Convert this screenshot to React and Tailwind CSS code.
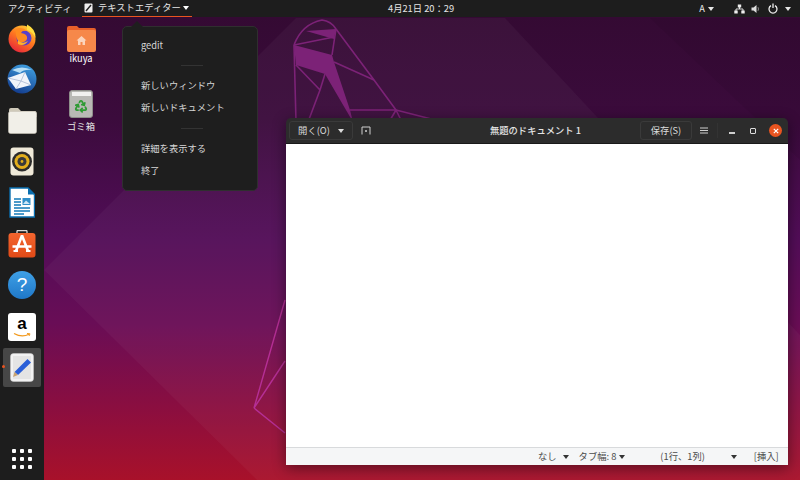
import { useState } from 'react';
import { Recycle } from 'lucide-react';

const font = 'font-["Noto_Sans_CJK_JP","Noto_Sans",sans-serif]';

function Caret({ className = 'border-t-white' }) {
  return <span className={`inline-block shrink-0 w-0 h-0 border-x-[3.5px] border-x-transparent border-t-[4px] ${className}`}></span>;
}

function Wallpaper() {
  return (
    <svg className="absolute inset-0 w-full h-full" viewBox="44 17 756 463">
      <polygon points="44,270 296,18 505,18 800,335 800,480 257,480" fill="#ffffff" opacity="0.035" />
      <polygon points="650,18 800,18 800,160" fill="#000000" opacity="0.05" />
      <g fill="none" stroke="#7c2277" strokeWidth="1.6" strokeLinejoin="round">
        <path d="M294,45 Q302,24 322,20 Q331,21 336,29 L374,80 L396,110 L443,122" />
        <path d="M294,45 L296,122 M336,29 L332,55 M294,45 L334,37 M296,65 L320,90 L308,122 M325,74 L320,90" />
        <path d="M334,62 L374,80 M350,110 L396,110 L389,122 M396,110 L402,122" />
      </g>
      <polygon points="306,31 336,29 334,39" fill="#7c2277" />
      <polygon points="294,45 332,55 334,62 350,110 353,122 325,74 296,65" fill="#7c2277" />
      <g fill="none" stroke="#b52f95" strokeWidth="1.4">
        <path d="M254,408 L285,300 M254,408 L285,361 M254,408 L285,433" />
      </g>
    </svg>
  );
}

function TopBar() {
  return (
    <div className={`h-[17px] shrink-0 bg-[#1d1d1d] text-[#e6e6e6] flex items-center text-[9.3px] whitespace-nowrap ${font}`}>
      <span className="ml-2 w-[74px]">アクティビティ</span>
      <div className="h-full w-[110px] flex items-center border-b border-[#e95420]">
        <svg className="ml-[2px] mr-[5px] shrink-0" width="9" height="10" viewBox="0 0 9 10">
          <rect x="0.5" y="0.5" width="8" height="9" rx="1" fill="#eee" />
          <path d="M2,8 L7,2" stroke="#222" strokeWidth="1.4" />
        </svg>
        <span>テキストエディター</span>
        <Caret className="ml-[2px] border-t-white" />
      </div>
      <span className="ml-[196px] w-[68px]">4月21日 20：29</span>
      <div className="ml-auto flex items-center pr-[9px]">
        <span>A</span>
        <Caret className="ml-[3px] mr-[20px] border-t-[#e6e6e6]" />
        <svg width="11" height="10" viewBox="0 0 11 10" fill="#eee">
          <rect x="3.8" y="0.5" width="3.4" height="3" />
          <rect x="0.3" y="6.5" width="3.4" height="3" />
          <rect x="7.3" y="6.5" width="3.4" height="3" />
          <path d="M5.5,3 V5 M2,7 V5 H9 V7" stroke="#eee" strokeWidth="0.9" fill="none" />
        </svg>
        <svg className="ml-[6px]" width="10" height="10" viewBox="0 0 10 10" fill="#ddd">
          <path d="M0.5,3.5 H2.5 L5.5,1 V9 L2.5,6.5 H0.5 Z" />
          <path d="M7,3.2 Q8,5 7,6.8" stroke="#888" fill="none" />
        </svg>
        <svg className="ml-[7px]" width="10" height="11" viewBox="0 0 10 11" fill="none" stroke="#eee" strokeWidth="1.3">
          <path d="M3,2.6 A4,4 0 1 0 7,2.6" />
          <path d="M5,0.6 V5" />
        </svg>
        <Caret className="ml-[7px] border-t-[#e6e6e6]" />
      </div>
    </div>
  );
}

const FirefoxIcon = (
  <svg width="30" height="30" viewBox="0 0 30 30">
    <defs>
      <linearGradient id="ff" x1="0.8" y1="0" x2="0.2" y2="1">
        <stop offset="0" stopColor="#ffd43a" />
        <stop offset="0.45" stopColor="#ff7a1f" />
        <stop offset="1" stopColor="#e5213c" />
      </linearGradient>
    </defs>
    <circle cx="15" cy="16" r="13.5" fill="url(#ff)" />
    <circle cx="17" cy="15" r="7.5" fill="#5a3fc8" />
    <path d="M9,6 Q15,3 20,8 Q15,7 14,10 Q21,11 20,16 Q18,20 13,19 Q8,17 9,6 Z" fill="#ff8a1f" />
    <path d="M20,1.5 Q29,6 28.5,15 Q26,9 20,7 Z" fill="#ffdd3f" />
    <path d="M11,17 Q15,22 21,18 Q17,24 11,21 Z" fill="#ffb32c" />
  </svg>
);

const ThunderbirdIcon = (
  <svg width="30" height="30" viewBox="0 0 30 30">
    <defs>
      <linearGradient id="tb" x1="0.7" y1="0" x2="0.3" y2="1">
        <stop offset="0" stopColor="#3f9fe0" />
        <stop offset="1" stopColor="#123a8c" />
      </linearGradient>
    </defs>
    <circle cx="15" cy="15" r="14.5" fill="url(#tb)" />
    <path d="M5,6 Q15,1 25,6 Q17,5 13,9 Z" fill="#b7def5" />
    <path d="M1,14 L18,8 L24,21 L9,25 Z" fill="#f1f4fa" />
    <path d="M1,14 L14,17 L18,8 M9,25 L14,17 L24,21" fill="none" stroke="#a9b8d2" strokeWidth="0.8" />
  </svg>
);

const FilesIcon = (
  <svg width="29" height="27" viewBox="0 0 29 27">
    <path d="M1,3 Q1,1 3,1 H10 L13,4 H27 Q28.5,4 28.5,6 V10 H1 Z" fill="#cfc9b9" />
    <rect x="0.5" y="4.5" width="28" height="22" rx="2" fill="#f1efe8" stroke="#c9c5b8" strokeWidth="0.6" />
  </svg>
);

const RhythmboxIcon = (
  <svg width="24" height="29" viewBox="0 0 24 29">
    <rect x="0.5" y="0.5" width="23" height="28" rx="3" fill="#efe9d8" />
    <circle cx="12" cy="14.5" r="10" fill="#2b2b2b" />
    <circle cx="12" cy="14.5" r="7.5" fill="#e3ae1c" />
    <circle cx="12" cy="14.5" r="4.5" fill="#3a3a3a" />
    <circle cx="12" cy="14.5" r="1.4" fill="#e3ae1c" />
  </svg>
);

const WriterIcon = (
  <svg width="26" height="31" viewBox="0 0 26 31">
    <path d="M1,1 H19 L25.5,7.5 V30 H1 Z" fill="#ffffff" stroke="#0a6fb0" strokeWidth="1.4" />
    <path d="M19,1 L25.5,7.5 H19 Z" fill="#0a6fb0" />
    <g stroke="#1379b8" strokeWidth="1.3">
      <path d="M5,12 H12 M5,15 H12 M5,18 H12 M5,21 H21 M5,24 H21 M5,27 H15" />
    </g>
    <rect x="13.5" y="11" width="8" height="7" fill="#2f8ec9" />
    <path d="M14,17 L17,13.5 L21,17 Z" fill="#cfe7f6" />
  </svg>
);

const SoftwareIcon = (
  <svg width="28" height="28" viewBox="0 0 28 28">
    <defs>
      <linearGradient id="sw" x1="0" y1="0" x2="0" y2="1">
        <stop offset="0" stopColor="#f4652e" />
        <stop offset="1" stopColor="#e04a17" />
      </linearGradient>
    </defs>
    <path d="M9,4 V1.5 Q9,0.5 10,0.5 H18 Q19,0.5 19,1.5 V4" fill="none" stroke="#d9d9d9" strokeWidth="1.3" />
    <rect x="0.5" y="3" width="27" height="24.5" rx="3" fill="url(#sw)" />
    <path d="M14,5.5 L20,21 M14,5.5 L8,21 M4.5,16.5 H23.5" stroke="#ffffff" strokeWidth="2.6" fill="none" />
    <path d="M5.5,21 H10 M18,21 H22.5" stroke="#ffffff" strokeWidth="2" />
  </svg>
);

const HelpIcon = (
  <div className="w-7 h-7 rounded-full bg-gradient-to-b from-[#3fa0e6] to-[#1f78c8] flex items-center justify-center text-white text-[19px] font-['Liberation_Sans',sans-serif]">?</div>
);

const AmazonIcon = (
  <div className="w-7 h-7 rounded-[3px] bg-white flex flex-col items-center">
    <span className="text-black text-[17px] leading-[20px] font-bold mt-[1px] font-['Liberation_Sans',sans-serif]">a</span>
    <svg className="-mt-[1px]" width="18" height="5" viewBox="0 0 18 5">
      <path d="M1,0.5 Q9,5 16,1.2" fill="none" stroke="#f29a1e" strokeWidth="1.2" />
      <path d="M14,0.5 L17,0.8 L16,3" fill="none" stroke="#f29a1e" strokeWidth="1" />
    </svg>
  </div>
);

const GeditIcon = (
  <svg width="24" height="29" viewBox="0 0 24 29">
    <rect x="0.5" y="0.5" width="23" height="28" rx="3" fill="#f2f2f2" stroke="#cfcfcf" strokeWidth="0.5" />
    <rect x="3" y="3" width="18" height="23" fill="#e4e4e4" />
    <path d="M17.5,6 L21,9.5 L8,22 L4.5,19 Z" fill="#2a5fd8" />
    <path d="M4.5,19 L8,22 L3,24 Z" fill="#c9a26f" />
  </svg>
);

function Dock() {
  const apps = [FirefoxIcon, ThunderbirdIcon, FilesIcon, RhythmboxIcon, WriterIcon, SoftwareIcon, HelpIcon, AmazonIcon];
  return (
    <div className="w-[44px] shrink-0 bg-[#1d1d1d] flex flex-col items-center">
      {apps.map((icon, i) => (
        <div key={i} className="h-[41.3px] w-full flex items-center justify-center">{icon}</div>
      ))}
      <div className="relative mt-[1px] w-[38px] h-[39px] rounded-[2px] bg-[#474747] flex items-center justify-center">
        {GeditIcon}
        <span className="absolute -left-[1px] top-[17px] w-[3px] h-[3px] rounded-full bg-[#e95420]"></span>
      </div>
      <div className="mt-auto mb-[11px] grid grid-cols-3 gap-[4px]">
        {Array.from({ length: 9 }).map((_, i) => (
          <span key={i} className="w-[4px] h-[4px] rounded-[1px] bg-white"></span>
        ))}
      </div>
    </div>
  );
}

function DesktopIcons() {
  return (
    <div className={`relative flex flex-col items-center w-[40px] ml-[17px] pt-[8px] text-white text-[9.3px] whitespace-nowrap ${font}`}>
      <svg width="29" height="27" viewBox="0 0 29 27">
        <path d="M0,3 Q0,1 2,1 H10 L12,3 H27 Q29,3 29,5 V10 H0 Z" fill="#e8602a" />
        <rect x="0" y="5" width="29" height="22" rx="2" fill="#f6884a" />
        <path d="M14.5,11 L9.5,15.5 H11 V20 H18 V15.5 H19.5 Z M13.5,17 H15.5 V20 H13.5 Z" fill="#fbd4bc" fillRule="evenodd" />
      </svg>
      <span className="-mt-[1px] leading-[14px]">ikuya</span>
      <div className="relative mt-[25px] w-[24px] h-[28px] rounded-[3px] bg-[#b9b9b5] border border-[#8e8e8a] flex flex-col items-center">
        <span className="mt-[1px] w-[19px] h-[4px] bg-[#f1f1ef]"></span>
        <Recycle className="mt-[3px] text-[#2f9b34]" size={14} strokeWidth={3} />
      </div>
      <span className="mt-[1px] leading-[14px] text-[#e8e8e8]">ゴミ箱</span>
    </div>
  );
}

function AppMenu() {
  const row = 'h-[22.5px] flex items-center';
  const sep = <div className="-ml-[18px] h-[18px] flex items-center"><span className="ml-[58px] w-[22px] border-t border-[#333]"></span></div>;
  return (
    <div className={`absolute left-[78px] top-[9px] w-[136px] h-[165px] rounded-[5px] bg-[#1e1e1e] border border-[#2f2f2f] text-[#d6d6d6] text-[9.3px] pt-[7px] pl-[18px] whitespace-nowrap ${font}`}>
      <span className="absolute left-[8px] -top-[6px] w-0 h-0 border-x-[6px] border-x-transparent border-b-[6px] border-b-[#1e1e1e]"></span>
      <div className={`${row} pt-[2px]`}>gedit</div>
      {sep}
      <div className={row}>新しいウィンドウ</div>
      <div className={row}>新しいドキュメント</div>
      {sep}
      <div className={row}>詳細を表示する</div>
      <div className={row}>終了</div>
    </div>
  );
}

function EditorWindow() {
  const [title] = useState('無題のドキュメント 1');
  return (
    <div className={`absolute left-[242px] top-[101px] w-[502px] h-[347px] flex flex-col rounded-t-[5px] overflow-hidden shadow-[0_3px_14px_rgba(0,0,0,0.45)] whitespace-nowrap ${font}`}>
      <div className="h-[26px] shrink-0 bg-[#2c2c2c] border-b border-[#191919] flex items-center text-[9.3px] text-[#dcdcdc]">
        <div className="flex-1 flex items-center pl-[3px]">
          <button className="w-[64px] h-[19px] rounded-[3px] border border-[#3a3a3a] flex items-center justify-center gap-[8px]">
            <span>開く(O)</span>
            <Caret className="border-t-[#dcdcdc]" />
          </button>
          <svg className="ml-[8px]" width="10" height="9" viewBox="0 0 10 9" fill="none" stroke="#cfcfcf" strokeWidth="1">
            <path d="M1,8.5 V1 H9 V8.5" />
            <path d="M5,4 V6 M4,5 H6" />
          </svg>
        </div>
        <span className="font-medium text-[#e4e4e4]">{title}</span>
        <div className="flex-1 flex items-center justify-end pr-[6px]">
          <button className="w-[52px] h-[19px] rounded-[3px] border border-[#3a3a3a]">保存(S)</button>
          <svg className="ml-[8px]" width="8" height="7" viewBox="0 0 8 7" stroke="#cfcfcf" strokeWidth="1">
            <path d="M0,1 H8 M0,3.5 H8 M0,6 H8" />
          </svg>
          <span className="ml-[9px] h-[15px] border-l border-[#333]"></span>
          <span className="ml-[11px] w-[6px] h-[2px] mt-[5px] bg-[#cfcfcf]"></span>
          <span className="ml-[15px] w-[6px] h-[6px] rounded-[1px] border border-[#dcdcdc]"></span>
          <span className="ml-[13px] w-[13px] h-[13px] rounded-full bg-[#e95420] flex items-center justify-center">
            <svg width="6" height="6" viewBox="0 0 6 6" stroke="#fff" strokeWidth="1.2">
              <path d="M0.8,0.8 L5.2,5.2 M5.2,0.8 L0.8,5.2" />
            </svg>
          </span>
        </div>
      </div>
      <div className="flex-1 bg-white"></div>
      <div className="h-[18px] shrink-0 bg-[#f5f6f7] border-t border-[#d8dadc] flex items-center text-[9.3px] text-[#4a4a4a]">
        <span className="ml-[252px]">なし</span>
        <Caret className="ml-[6px] border-t-[#333]" />
        <span className="ml-[10px]">タブ幅: 8</span>
        <Caret className="ml-[3px] border-t-[#333]" />
        <span className="ml-[35px]">(1行、1列)</span>
        <Caret className="ml-[26px] border-t-[#333]" />
        <span className="ml-[17px]">[挿入]</span>
      </div>
    </div>
  );
}

export default function App() {
  return (
    <div className="w-[800px] h-[480px] overflow-hidden flex flex-col">
      <TopBar />
      <div className="flex-1 flex min-h-0">
        <Dock />
        <div className="relative flex-1 bg-[linear-gradient(180deg,#340a33_0%,#3b0b3c_22%,#520d58_48%,#690d56_66%,#8a0e40_84%,#a8112a_100%)]">
          <Wallpaper />
          <DesktopIcons />
          <AppMenu />
          <EditorWindow />
        </div>
      </div>
    </div>
  );
}
